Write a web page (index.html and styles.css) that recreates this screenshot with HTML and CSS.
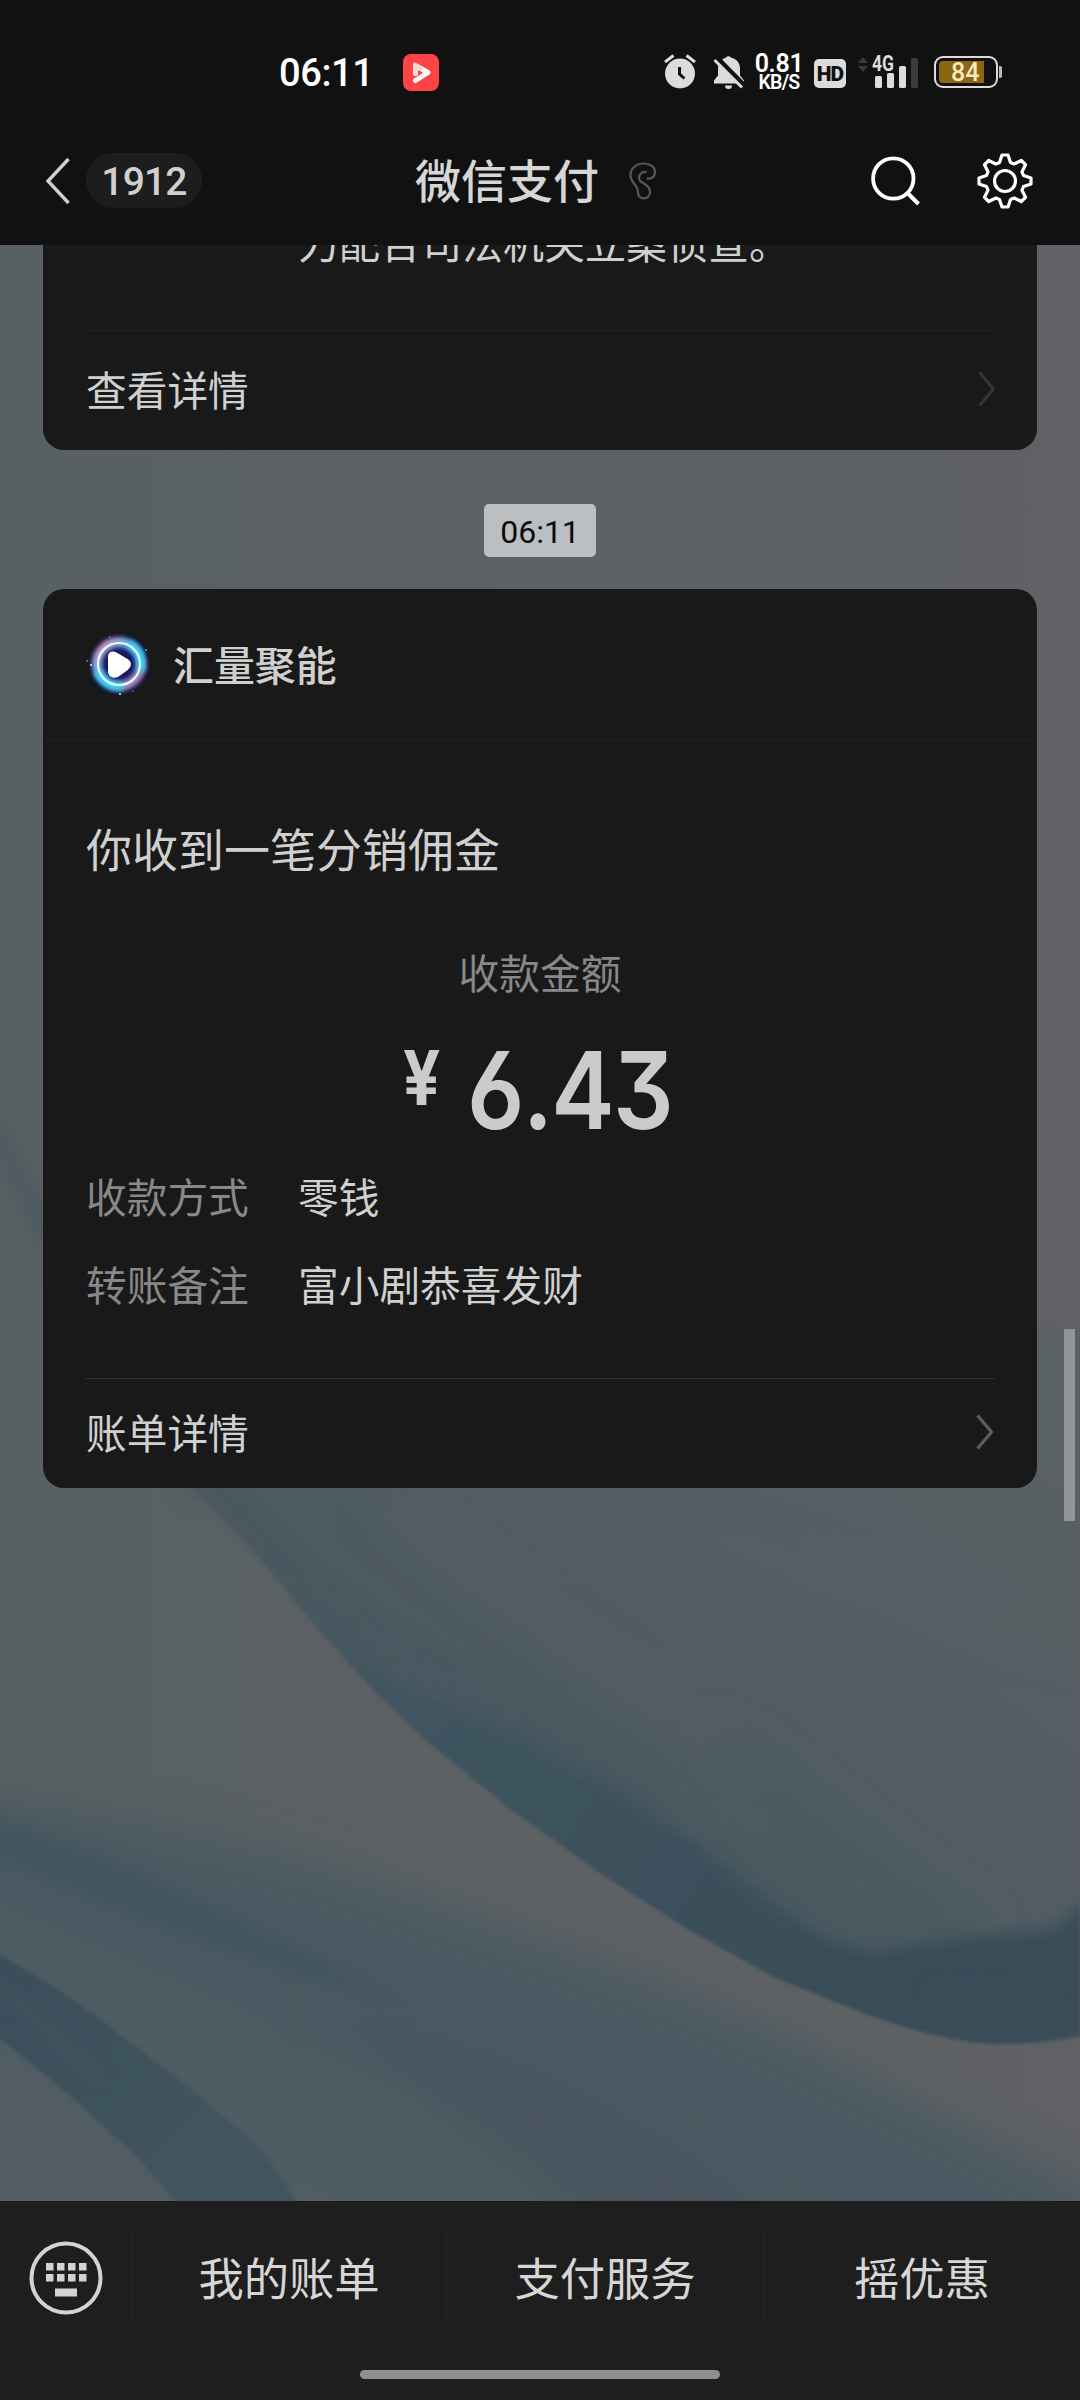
FILE: index.html
```html
<!DOCTYPE html>
<html lang="zh-CN">
<head>
<meta charset="utf-8">
<title>微信支付</title>
<link rel="stylesheet" href="styles.css">
</head>
<body>
<div class="phone">
  <header class="top">
    <div class="status">
      <span class="clock">06:11</span>
      <svg class="app" width="36" height="37" viewBox="0 0 36 37"><rect width="36" height="37" rx="8" fill="#fc4447"/><path d="M12.500 19.500V11.500L25 18.500 12.500 26.500" fill="none" stroke="#fff" stroke-width="5" stroke-linecap="round" stroke-linejoin="round"/><path d="M12.500 19.500V11.500l5 3" fill="none" stroke="#fbd3d4" stroke-width="4" stroke-linecap="round"/></svg>
      <svg class="alarm" width="32" height="36" viewBox="0 0 32 36" fill="#dcdcdc"><circle cx="16" cy="19.500" r="15"/><path d="M1 8 9.500 1.500M31 8 22.500 1.500" stroke="#dcdcdc" stroke-width="3"/><path d="M15.500 13v7l5 4.500" fill="none" stroke="#111" stroke-width="3"/></svg>
      <svg class="bell" width="32" height="36" viewBox="0 0 32 36"><path d="M13 3.500a3 3 0 0 1 5 0c6 1.500 9 6 9 11v7l4 5v3H1v-3l4-5v-7c0-5 3-9.500 8-11zM12 31.500h7a3.500 3.500 0 0 1-7 0z" fill="#dcdcdc"/><path d="M3 3.500 31 32" stroke="#111" stroke-width="6"/><path d="M1.500 6 29 33.500" stroke="#dcdcdc" stroke-width="3"/></svg>
      <div class="speed"><span class="rate">0.81</span><span class="unit">KB/S</span></div>
      <span class="hd">HD</span>
      <svg class="signal" width="61" height="34" viewBox="0 0 61 34"><path d="M0 8l5-6 5 6zM0 11l5 6 5-6z" fill="#3b3b3b"/><text class="net" x="14" y="16" textLength="22" lengthAdjust="spacingAndGlyphs">4G</text><g fill="#dcdcdc"><rect x="17" y="21" width="7" height="12" rx="1.500"/><rect x="29" y="18" width="7" height="15" rx="1.500"/><rect x="41" y="11" width="7" height="22" rx="1.500"/></g><rect x="53" y="3" width="7" height="30" rx="1.500" fill="#3b3b3b"/></svg>
      <div class="battery"><span class="level">84</span></div>
      <i class="nub"></i>
    </div>
    <nav class="bar">
      <svg class="back" width="26" height="48" viewBox="0 0 26 48"><path d="M23.500 2 3 24l20.500 22" fill="none" stroke="#cfcfcf" stroke-width="3.400"/></svg>
      <span class="unread">1912</span>
      <h1 class="title">微信支付</h1>
      <svg class="ear" width="28" height="38" viewBox="0 0 28 38"><path d="M17.500 16.500c5 1 8.500-2 8.500-6.500 0-5-4.500-8.500-11.500-8.500C6.500 1.500 1.500 7 1.500 13c0 4.500 2 7 5 10.500 3.500 4 1.500 7.500 3.500 10.500 2 3 7.500 3.500 10-.5 2.500-4.500 0-8.500-3.500-11-3.500-2.200-6.500-3-6.500-6.500 0-4 3-6.500 7.500-6" fill="none" stroke="#585858" stroke-width="2.200"/></svg>
      <svg class="search" width="50" height="50" viewBox="0 0 50 50"><circle cx="22.300" cy="22.500" r="20.200" fill="none" stroke="#fff" stroke-width="3.800"/><path d="M36 36.500 47.500 48" stroke="#fff" stroke-width="4"/></svg>
      <svg class="gear" width="58" height="58" viewBox="-29 -29 58 58" fill="none" stroke="#fff" stroke-width="3.200" stroke-linejoin="round"><path d="M-3-26 3-26 5.500-18.500 9.200-17 16.300-20.500 20.500-16.300 17-9.200 18.500-5.500 26-3 26 3 18.500 5.500 17 9.200 20.500 16.300 16.300 20.500 9.200 17 5.500 18.500 3 26-3 26-5.500 18.500-9.200 17-16.300 20.500-20.500 16.300-17 9.200-18.500 5.500-26 3-26-3-18.500-5.500-17-9.200-20.500-16.300-16.300-20.500-9.200-17-5.500-18.500z"/><circle r="10.500"/></svg>
    </nav>
  </header>

  <main class="chat">
    <svg class="wallpaper" width="1080" height="1956" viewBox="0 245 1080 1956" preserveAspectRatio="none">
      <defs>
        <linearGradient id="base" x1="0" y1="0" x2="1" y2="0"><stop offset="0" stop-color="#576062"/><stop offset=".5" stop-color="#5d6164"/><stop offset="1" stop-color="#5f6164"/></linearGradient>
        <linearGradient id="sheet" gradientUnits="userSpaceOnUse" x1="940" y1="1350" x2="560" y2="1840"><stop offset="0" stop-color="#5a6264"/><stop offset=".4" stop-color="#555c64"/><stop offset=".7" stop-color="#515c63"/><stop offset="1" stop-color="#4a595f"/></linearGradient>
        <linearGradient id="ribbon" gradientUnits="userSpaceOnUse" x1="180" y1="1490" x2="900" y2="2000"><stop offset="0" stop-color="#4d5c64" stop-opacity=".3"/><stop offset=".35" stop-color="#3f545e"/><stop offset="1" stop-color="#384d58"/></linearGradient>
        <linearGradient id="fold" gradientUnits="userSpaceOnUse" x1="430" y1="1880" x2="290" y2="2200"><stop offset="0" stop-color="#4b5a62"/><stop offset=".5" stop-color="#4c5a62"/><stop offset="1" stop-color="#515d63"/></linearGradient>
        <linearGradient id="left" gradientUnits="userSpaceOnUse" x1="0" y1="1980" x2="250" y2="2200"><stop offset="0" stop-color="#3a4f5a"/><stop offset="1" stop-color="#42555f"/></linearGradient>
        <clipPath id="above"><path d="M160 1455 262 1561 310 1620 375 1692 427 1741 510 1809 606 1877 689 1930 771 1976 868 2015Q950 2044 999 2044 1040 2044 1080 2036V245H160z"/></clipPath>
        <filter id="s8" x="-20%" y="-20%" width="140%" height="140%"><feGaussianBlur stdDeviation="8"/></filter>
        <filter id="s20" x="-20%" y="-20%" width="140%" height="140%"><feGaussianBlur stdDeviation="20"/></filter>
        <filter id="s2"><feGaussianBlur stdDeviation="1.500"/></filter>
      </defs>
      <rect y="245" width="1080" height="1956" fill="url(#base)"/>
      <path d="M-40 1080C20 1200 80 1340 190 1500L240 1480C120 1360 40 1200-40 1040z" fill="#4e5a61" filter="url(#s8)"/>
      <path d="M-60 1790C120 1810 260 1840 386 1885S690 1985 826 2055 1000 2140 1140 2220V2300H-60z" fill="url(#fold)" filter="url(#s20)"/>
      <path d="M-30 1810C120 1850 240 1920 430 2010 300 1985 150 1930-30 1850z" fill="#43555d" opacity=".85" filter="url(#s8)"/>
      <path d="M300 2000C500 2030 640 2110 800 2230L600 2230C500 2140 380 2060 300 2000z" fill="#48555f" filter="url(#s20)"/>
      <g filter="url(#s2)">
        <g clip-path="url(#above)">
          <path d="M160 1455 262 1561 310 1620 375 1692 427 1741 510 1809 606 1877 689 1930 771 1976 868 2015 1080 2060 1100 2060V1330H500Q250 1420 160 1455z" fill="url(#sheet)"/>
          <path d="M160 1430C300 1530 420 1640 560 1720S780 1880 920 1920L1000 2060 740 2000 400 1740z" fill="#4a5a60" opacity=".7" filter="url(#s20)"/>
          <path d="M230 1470C320 1580 420 1640 560 1690 440 1600 340 1530 290 1470z" fill="#4e5a60" filter="url(#s8)"/>
          <path d="M560 1480C700 1540 860 1600 1090 1640M380 1500C520 1620 640 1690 760 1760" fill="none" stroke="#5a6164" stroke-width="26" opacity=".6" filter="url(#s20)"/>
          <path d="M700 1720C800 1760 900 1880 1000 1920L880 1960C800 1920 760 1800 700 1720z" fill="#4c5a60" filter="url(#s20)"/>
          <path d="M180 1470 300 1600 393 1683 523 1736 620 1789 689 1838 751 1886 813 1930Q860 1958 910 1945 960 1935 1047 1930 1070 1920 1110 1880V2080H860L500 1830 250 1590z" fill="url(#ribbon)" filter="url(#s8)"/>
          <path d="M930 1990C980 2000 1030 1985 1090 1970" fill="none" stroke="#425661" stroke-width="8" opacity=".5" filter="url(#s8)"/>
        </g>
        <path d="M-10 1950Q40 1975 90 2012T179 2080 248 2138 303 2215H188L138 2158 69 2095-10 2030z" fill="url(#left)"/>
        <path d="M0 1985 100 2080" stroke="#4a5b63" stroke-width="7" opacity=".6" filter="url(#s8)"/>
      </g>
    </svg>

    <section class="card previous">
      <p class="clipped">力配合司法机关立案侦查。</p>
      <a class="link faint"><span>查看详情</span><svg width="18" height="36" viewBox="0 0 18 36"><path d="M1.500 1.500 15.500 18 1.500 34.500" fill="none" stroke="currentColor" stroke-width="3"/></svg></a>
    </section>

    <time class="stamp">06:11</time>

    <section class="card payment">
      <div class="merchant">
        <svg class="logo" width="66" height="70" viewBox="-33 -35 66 70">
          <defs>
            <radialGradient id="halo"><stop offset=".5" stop-color="#1b1560"/><stop offset=".78" stop-color="#0e0c40"/><stop offset="1" stop-color="#12122a" stop-opacity="0"/></radialGradient>
            <linearGradient id="ring" x1="0" y1="0" x2="1" y2="1"><stop offset="0" stop-color="#f08aa8"/><stop offset=".3" stop-color="#6fb6e6"/><stop offset=".6" stop-color="#2fb4e8"/><stop offset="1" stop-color="#d878a8"/></linearGradient>
            <filter id="glow" x="-30%" y="-30%" width="160%" height="160%"><feGaussianBlur stdDeviation="2"/></filter>
          </defs>
          <circle r="34" fill="url(#halo)"/>
          <circle r="22" fill="none" stroke="url(#ring)" stroke-width="10" filter="url(#glow)"/>
          <path d="M10-20A22 22 0 0 1 21 7M-21 7A22 22 0 0 0 4 22" fill="none" stroke="#3ccdf4" stroke-width="8" filter="url(#glow)"/>
          <circle r="21" fill="none" stroke="#fff" stroke-opacity=".9" stroke-width="2.200"/>
          <path d="M-8-8Q-7-10-4-9L7-2.500Q11 0 7 3.500L-2 10Q-7 12-8 8z" fill="#fff" stroke="#fff" stroke-width="6" stroke-linejoin="round"/>
          <g fill="#dfe4ff"><circle cx="-28" cy="1" r="1"/><circle cx="1" cy="30" r="1"/><circle cx="27" cy="-14" r=".8"/><circle cx="-32" cy="-3" r=".7"/><circle cx="14" cy="27" r=".6"/><circle cx="-9" cy="-27" r=".6"/></g>
        </svg>
        <h2 class="name">汇量聚能</h2>
      </div>
      <p class="headline">你收到一笔分销佣金</p>
      <p class="label-center">收款金额</p>
      <p class="amount"><span class="yen">¥</span><span class="sum">6.43</span></p>
      <dl class="rows">
        <dt>收款方式</dt><dd>零钱</dd>
        <dt>转账备注</dt><dd>富小剧恭喜发财</dd>
      </dl>
      <a class="link"><span>账单详情</span><svg width="18" height="36" viewBox="0 0 18 36"><path d="M1.500 1.500 15.500 18 1.500 34.500" fill="none" stroke="currentColor" stroke-width="3.200"/></svg></a>
    </section>
    <i class="scrollbar"></i>
  </main>

  <footer class="bottom">
    <div class="menu">
      <div class="keyboard"><svg width="74" height="74" viewBox="-37 -37 74 74"><circle r="34.500" fill="none" stroke="#d3d3d3" stroke-width="4"/><g fill="#d3d3d3"><path d="M-20-15h7.500v7.500h-7.500zM-9-15h7.500v7.500H-9zM2-15h7.500v7.500H2zM13-15h7.500v7.500H13zM-20-4h7.500v7.500h-7.500zM-9-4h7.500v7.500H-9zM2-4h7.500v7.500H2zM13-4h7.500v7.500H13z"/><rect x="-11" y="10.500" width="22" height="8"/></g></svg></div>
      <a class="entry">我的账单</a>
      <a class="entry">支付服务</a>
      <a class="entry">摇优惠</a>
    </div>
    <i class="home"></i>
  </footer>
</div>
</body>
</html>
```
FILE: styles.css
```css
* { box-sizing: border-box; }
body { margin: 0; background: #111; }
h1, h2, p, dl, dd { margin: 0; font-weight: 400; }
i { display: block; }
svg { display: block; flex: none; }

.phone {
  width: 1080px;
  height: 2400px;
  display: flex;
  flex-direction: column;
  overflow: hidden;
  font-family: Roboto, "Noto Sans CJK SC", sans-serif;
  color: #d0d0d0;
}

/* status bar and title */
.top { height: 245px; background: #111; flex: none; }
.status { height: 144px; display: flex; align-items: center; padding-left: 279px; }
.clock { width: 124px; font-size: 38px; font-weight: 500; line-height: 44px; padding-top: 2px; color: #fff; white-space: nowrap; letter-spacing: -0.4px; }
.app { margin-right: 225px; }
.alarm { margin-right: 17px; }
.bell { margin-right: 11px; }
.speed { width: 46px; display: flex; flex-direction: column; align-items: center; color: #fff; margin-right: 12px; white-space: nowrap; }
.rate { font-size: 25px; font-weight: 600; line-height: 20px; letter-spacing: -0.3px; }
.unit { font-size: 19.500px; font-weight: 600; line-height: 17px; letter-spacing: -0.8px; }
.hd { width: 32px; height: 29px; border-radius: 5px; background: #dcdcdc; color: #111; font-size: 21px; font-weight: 900; line-height: 30px; text-align: center; letter-spacing: -1px; margin: 2px 12px 0 0; }
.signal { margin: 0 15px 0 0; overflow: visible; }
.net { font-size: 22px; font-weight: 700; fill: #dcdcdc; }
.battery { width: 64px; height: 32px; border: 2px solid #dcdcdc; border-radius: 9px; padding: 3px; margin-right: 1px; }
.level { display: block; width: 45px; height: 22px; border-radius: 4px 0 0 4px; background: #8b6713; color: #fbe7bd; font-size: 25px; font-weight: 500; line-height: 24px; padding-left: 12px; }
.nub { width: 3px; height: 12px; border-radius: 0 2px 2px 0; background: #bbb; }

.bar { height: 73px; display: flex; align-items: center; padding-left: 45px; }
.back { margin-right: 15px; }
.unread { width: 116px; height: 55px; border-radius: 28px; background: #1d1d1d; text-align: center; font-size: 39px; font-weight: 500; letter-spacing: -0.8px; line-height: 58px; margin-right: 213px; }
.title { width: 214px; font-size: 46px; font-weight: 500; line-height: 60px; padding-top: 2px; white-space: nowrap; color: #d6d6d6; }
.ear { margin-right: 214px; }
.search { margin-right: 55px; }

/* conversation */
.chat { position: relative; height: 1956px; flex: none; overflow: hidden; padding: 0 43px; display: flex; flex-direction: column; align-items: stretch; background: #5c6164; }
.wallpaper { position: absolute; left: 0; top: 0; }
.card { position: relative; background: #191919; border-radius: 21px; padding: 0 43px; }
.previous { height: 205px; border-radius: 0 0 21px 21px; }
.clipped { height: 85px; padding-left: 212px; font-size: 41px; line-height: 0; white-space: nowrap; }
.link { display: flex; align-items: center; justify-content: space-between; height: 111px; border-top: 1px solid #333; font-size: 40.700px; color: #d0d0d0; line-height: 60px; }
.link span { padding-top: 2px; }
.link svg { color: #5d5d5d; margin-bottom: 4px; }
.faint { height: 120px; border-top-color: #242424; }
.faint svg { color: #363636; margin-right: -2px; }
.stamp { position: relative; align-self: center; width: 112px; height: 53px; margin: 54px 0 32px; border-radius: 5px; background: #bcbfc1; color: #0b0b0b; font-size: 32px; line-height: 56px; text-align: center; }
.payment { height: 899px; }
.merchant { height: 151px; margin: 0 -43px; padding: 0 43px; border-bottom: 1px solid #222; display: flex; align-items: center; }
.logo { margin-right: 21px; }
.name { font-size: 40.900px; font-weight: 500; line-height: 60px; padding-top: 5px; }
.headline { margin-top: 76px; font-size: 46px; line-height: 70px; }
.label-center { margin-top: 59px; text-align: center; font-size: 40.700px; line-height: 60px; color: #888; }
.amount { height: 157px; margin-top: 15px; display: flex; align-items: flex-start; font-family: Inter, sans-serif; font-weight: 600; color: #cbcbcb; padding-left: 317px; }
.yen { width: 64px; font-size: 76px; font-weight: 700; line-height: 114px; transform: scaleX(0.86); transform-origin: 0 0; }
.sum { font-size: 107px; line-height: 140px; letter-spacing: -2px; font-feature-settings: "cv03", "cv09"; transform: scaleX(0.89); transform-origin: 0 0; }
.rows { display: grid; grid-template-columns: 212px 1fr; grid-auto-rows: 88px; font-size: 40.700px; line-height: 60px; margin: -8px 0 33px; }
.rows dt { color: #888; }
.scrollbar { position: absolute; right: 5px; top: 1084px; width: 11px; height: 192px; background: #8f9598; }

/* bottom menu */
.bottom { height: 199px; flex: none; background: #1e1e1e; display: flex; flex-direction: column; align-items: center; }
.menu { width: 1080px; height: 169px; display: grid; grid-template-columns: 131px 315px 317px 317px; padding: 31px 0 50px; }
.keyboard { padding: 9px 0 0 29px; }
.entry { height: 88px; border-left: 1px solid #272727; text-align: center; font-size: 45.300px; line-height: 98px; color: #d6d6d6; }
.home { width: 360px; height: 9px; border-radius: 5px; background: #8f8f8f; }
```
